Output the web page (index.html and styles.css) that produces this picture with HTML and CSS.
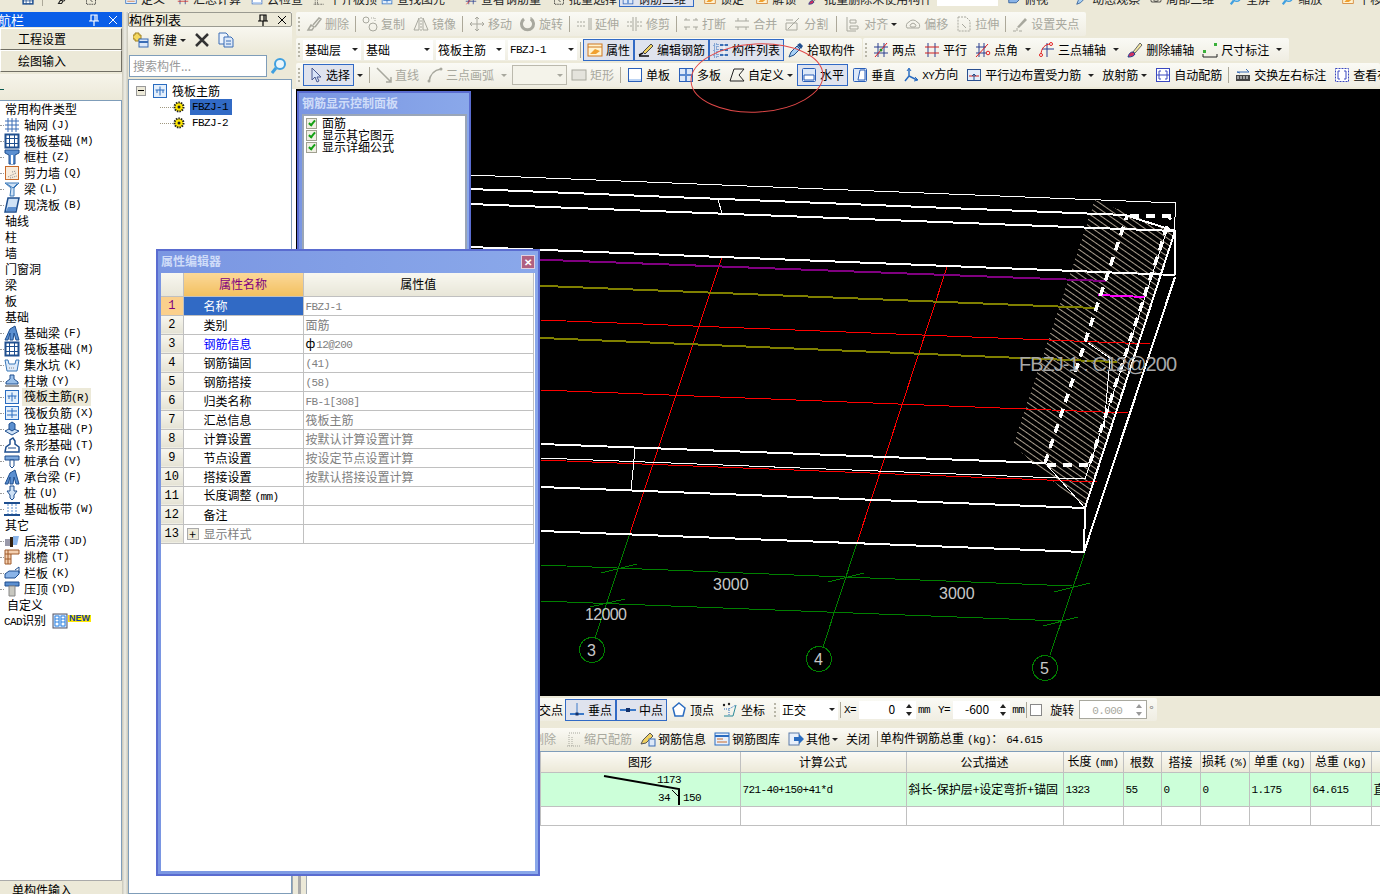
FILE: index.html
```html
<!DOCTYPE html>
<html lang="zh-CN">

<head>
    <meta charset="UTF-8">
    <title>筏板主筋 - 绘图输入</title>
    <link rel="stylesheet" href="styles.css">
</head>

<body>
    <!-- 图标 -->
    <svg class="defs" xmlns="http://www.w3.org/2000/svg">
        <symbol id="del" viewBox="0 0 16 16"><path d="M2 14l3-5 3 2-2 3zM7 9l6-7 2 1-6 8" fill="none" stroke="currentColor" stroke-width="1.5"/></symbol>
        <symbol id="copy" viewBox="0 0 16 16"><circle cx="4" cy="4" r="3" fill="none" stroke="currentColor"/><circle cx="11" cy="11" r="4" fill="none" stroke="currentColor"/><path d="M9 2h4v4" fill="none" stroke="currentColor" stroke-dasharray="1 1"/></symbol>
        <symbol id="mirror" viewBox="0 0 16 16"><path d="M6 2v12H1zM10 2v12h5z" fill="none" stroke="currentColor"/><path d="M8 1v14" stroke="currentColor" stroke-dasharray="2 1"/></symbol>
        <symbol id="move" viewBox="0 0 16 16"><path d="M8 1v14M1 8h14M6 3l2-2 2 2M6 13l2 2 2-2M3 6L1 8l2 2M13 6l2 2-2 2" fill="none" stroke="currentColor"/></symbol>
        <symbol id="rot" viewBox="0 0 16 16"><path d="M4 3a6 6 0 1 0 7 0" fill="none" stroke="currentColor" stroke-width="3"/><path d="M11 1v4h3" fill="none" stroke="currentColor"/></symbol>
        <symbol id="ext" viewBox="0 0 16 16"><path d="M1 6h9M1 10h9" stroke="currentColor" stroke-dasharray="2 1"/><path d="M13 2v12M15 2v12" stroke="currentColor"/></symbol>
        <symbol id="trim" viewBox="0 0 16 16"><path d="M6 1v14M9 1v14" stroke="currentColor"/><path d="M0 6h6M0 10h6M10 6h6M10 10h6" stroke="currentColor" stroke-dasharray="2 1"/></symbol>
        <symbol id="brk" viewBox="0 0 16 16"><path d="M1 4h6M10 4h5M1 11h6M10 11h5M3 2v2M13 2v2M3 11v3M13 11v3" stroke="currentColor"/></symbol>
        <symbol id="merge" viewBox="0 0 16 16"><path d="M1 5h14M1 11h14M4 2v3M12 2v3M4 11v3M12 11v3" stroke="currentColor"/></symbol>
        <symbol id="split" viewBox="0 0 16 16"><path d="M1 7h11v7H1zM3 13l11-11" fill="none" stroke="currentColor"/><path d="M1 4h7" stroke="currentColor"/></symbol>
        <symbol id="align" viewBox="0 0 16 16"><path d="M2 1v14h9M5 4h6v3H5zM5 10h8v3H5z" fill="none" stroke="currentColor"/></symbol>
        <symbol id="offset" viewBox="0 0 16 16"><path d="M2 12a4 4 0 0 1 2-6 5 5 0 0 1 8 0 4 4 0 0 1 2 6zM6 11a2 2 0 0 1 0-3 3 3 0 0 1 4 0 2 2 0 0 1 0 3z" fill="none" stroke="currentColor"/></symbol>
        <symbol id="stretch" viewBox="0 0 16 16"><path d="M2 1h8l4 4v10H2z" fill="none" stroke="currentColor" stroke-dasharray="2 1"/><path d="M6 8l4 4" stroke="currentColor"/></symbol>
        <symbol id="grip2" viewBox="0 0 16 16"><path d="M5 11L13 2l2 2-8 8z" fill="currentColor"/><path d="M1 15h3M7 15h3M5 12v3" stroke="currentColor"/></symbol>
        <symbol id="prop" viewBox="0 0 16 16"><rect x="1" y="2" width="14" height="12" fill="#fff3d0" stroke="#d07820"/><path d="M1 5h14" stroke="#d07820"/><path d="M3 12l5-5 5 2-4 3z" fill="#f0a030"/></symbol>
        <symbol id="edit" viewBox="0 0 16 16"><path d="M5 10l8-8 2 2-8 8z" fill="#f0d060" stroke="#444"/><path d="M1 14h10M1 13l4-2" stroke="#111" stroke-width="1.5"/></symbol>
        <symbol id="lst" viewBox="0 0 16 16"><path d="M1 2h4v3H1zM1 7h4v3H1zM1 12h4v3H1z" fill="#cfe0f4" stroke="#3a6db5" stroke-dasharray="1 1"/><path d="M7 3h8M7 8h8M7 13h8" stroke="#3a6db5" stroke-width="2"/><path d="M11 1v14" stroke="#fff"/></symbol>
        <symbol id="pick" viewBox="0 0 16 16"><path d="M1 15l2-5 6-6 3 3-6 6z" fill="#a8d0f4" stroke="#1f4f8f"/><path d="M9 3l3-2 3 3-2 3z" fill="#1f4f8f"/></symbol>
        <symbol id="twop" viewBox="0 0 16 16"><path d="M1 5h14M1 11h14M5 1v14M11 1v14" stroke="#2a3f8f"/><path d="M2 15L14 1" stroke="#e02020"/><circle cx="8" cy="8" r="1.5" fill="#2a8a2a"/></symbol>
        <symbol id="par" viewBox="0 0 16 16"><path d="M4 1v14M11 1v14" stroke="#2a3f8f"/><path d="M1 5h14M1 11h14" stroke="#d02020"/></symbol>
        <symbol id="ang" viewBox="0 0 16 16"><path d="M1 5h10M1 11h10M4 1v14M9 1v14" stroke="#2a3f8f"/><path d="M1 15L13 2" stroke="#e02020"/><circle cx="13" cy="11" r="1.8" fill="none" stroke="#e02020"/></symbol>
        <symbol id="arc3" viewBox="0 0 16 16"><path d="M8 1v14M3 7h12" stroke="#2a3f8f"/><path d="M2 13C2 6 6 2 12 2" fill="none" stroke="#e02020"/><circle cx="2" cy="13" r="1.5" fill="#fff" stroke="#e02020"/><circle cx="12" cy="2" r="1.5" fill="#fff" stroke="#e02020"/></symbol>
        <symbol id="delax" viewBox="0 0 16 16"><path d="M6 10L13 1l2 2-7 8z" fill="#f4e8a0" stroke="#666"/><path d="M1 15c1-4 3-5 5-5l2 2c-1 2-3 3-7 3z" fill="#d03060" stroke="#1f3f8f"/></symbol>
        <symbol id="dim" viewBox="0 0 16 16"><path d="M1 15h14M1 12v3M15 12v3" stroke="#222"/><rect x="1" y="8" width="3" height="3" fill="#3ab03a"/><rect x="12" y="1" width="3" height="3" fill="#3ab03a"/></symbol>
        <symbol id="arrow" viewBox="0 0 16 16"><path d="M5 1v12l3-3 2 5 2-1-2-4h4z" fill="#d8e4f8" stroke="#4a5a90"/></symbol>
        <symbol id="ln" viewBox="0 0 16 16"><path d="M1 1l14 14M10 15h5v-5" fill="none" stroke="currentColor" stroke-width="1.5"/></symbol>
        <symbol id="arc" viewBox="0 0 16 16"><path d="M2 15C3 7 7 3 14 2" fill="none" stroke="currentColor" stroke-width="1.5"/><circle cx="2" cy="14" r="1.5" fill="currentColor"/><circle cx="14" cy="2" r="1.5" fill="currentColor"/></symbol>
        <symbol id="rc" viewBox="0 0 16 16"><rect x="1" y="3" width="14" height="10" fill="#e4e3dc" stroke="currentColor"/></symbol>
        <symbol id="single" viewBox="0 0 16 16"><rect x="1.5" y="1.5" width="13" height="13" fill="#fff" stroke="#2a5fb8"/><path d="M2 12h12v2H2z" fill="#bcd4f4"/></symbol>
        <symbol id="multi" viewBox="0 0 16 16"><rect x="1.5" y="1.5" width="13" height="13" fill="#dce8f8" stroke="#2a5fb8"/><path d="M8 2v12M2 8h12" stroke="#5a8ad0" stroke-width="2"/></symbol>
        <symbol id="custom" viewBox="0 0 16 16"><path d="M5 2h10l-5 6 5 6H1z" fill="none" stroke="#222"/></symbol>
        <symbol id="hz" viewBox="0 0 16 16"><rect x="1.5" y="1.5" width="13" height="13" rx="1" fill="#dce8f8" stroke="#2a5fb8"/><path d="M3 8h10v5H3z" fill="#fff" stroke="#2a5fb8"/></symbol>
        <symbol id="vt" viewBox="0 0 16 16"><rect x="1.5" y="1.5" width="13" height="13" rx="1" fill="#dce8f8" stroke="#2a5fb8"/><path d="M8 3h5v10H6z" fill="#fff" stroke="#2a5fb8"/></symbol>
        <symbol id="xy" viewBox="0 0 16 16"><path d="M6 2v7l8 4M6 9l-4 5" fill="none" stroke="#2a6cc0" stroke-width="1.5"/><path d="M4 4l2-3 2 3M12 10l3 3-4 1" fill="none" stroke="#2a6cc0"/></symbol>
        <symbol id="pbar" viewBox="0 0 16 16"><rect x="1.5" y="2.5" width="13" height="11" fill="#e4eefa" stroke="#2a4f8f"/><path d="M3 9h10" stroke="#d02020"/><path d="M8 13V7M6 9l2-2 2 2" fill="none" stroke="#1f4f8f"/></symbol>
        <symbol id="auto" viewBox="0 0 16 16"><rect x="1.5" y="1.5" width="13" height="13" fill="#fff" stroke="#3a48c0"/><path d="M6 4H4v8h2M10 4h2v8h-2M2 8h12" fill="none" stroke="#3a48c0"/></symbol>
        <symbol id="swap" viewBox="0 0 16 16"><rect x="1" y="8" width="14" height="6" fill="#444"/><path d="M3 9v3M6 9v3M9 9v3M12 9v3" stroke="#fff"/><path d="M2 5h12M11 2l3 3M5 6l-3-1" fill="none" stroke="#3a6db5"/></symbol>
        <symbol id="look" viewBox="0 0 16 16"><rect x="1.5" y="1.5" width="13" height="13" fill="#fff" stroke="#3a48c0" stroke-dasharray="2 1"/><path d="M6 4H4v8h2M10 4h2v8h-2" fill="none" stroke="#3a48c0"/></symbol>
        <symbol id="perp" viewBox="0 0 16 16"><path d="M1 12h14" stroke="#3a78c8" stroke-width="2"/><path d="M8 1v11" stroke="#3a78c8"/><rect x="6.5" y="10.5" width="3" height="3" fill="#12306a"/></symbol>
        <symbol id="midp" viewBox="0 0 16 16"><path d="M0 8h16" stroke="#3a78c8" stroke-width="2"/><rect x="6" y="6" width="4" height="4" fill="#12306a"/></symbol>
        <symbol id="apex" viewBox="0 0 16 16"><path d="M8 1l6 5-2 8H4L2 6z" fill="#fff" stroke="#2a6cc0" stroke-width="1.5"/></symbol>
        <symbol id="coord" viewBox="0 0 16 16"><path d="M2 14h9l3-11" fill="none" stroke="#2a8a9a"/><path d="M2 7h5v7M7 7l7-4" fill="none" stroke="#2a6cc0" stroke-dasharray="1 1"/><circle cx="2" cy="3" r="1.2" fill="#222"/><circle cx="7" cy="2" r="1.2" fill="#222"/></symbol>
        <symbol id="scale" viewBox="0 0 16 16"><path d="M3 15V3M6 15V6M1 15h14M3 2h11" fill="none" stroke="currentColor" stroke-dasharray="1 1"/></symbol>
        <symbol id="info" viewBox="0 0 16 16"><path d="M1 13l2-4 7-7 3 3-7 7z" fill="#f0d060" stroke="#555"/><rect x="9" y="8" width="6" height="7" fill="#dce8f8" stroke="#3a6db5"/></symbol>
        <symbol id="lib" viewBox="0 0 16 16"><rect x="1" y="2" width="14" height="12" fill="#e8f0fb" stroke="#2a6cc0"/><path d="M1 5h14" stroke="#2a6cc0" stroke-width="2"/><path d="M3 8h6M3 11h10" stroke="#c86a2a"/></symbol>
        <symbol id="oth" viewBox="0 0 16 16"><rect x="1" y="2" width="10" height="12" fill="#e8f0fb" stroke="#5a7aa8"/><path d="M6 6h5V3l5 5-5 5v-3H6z" fill="#2a6cc0"/></symbol>
        <symbol id="grid" viewBox="0 0 16 16"><path d="M1 4h14M1 8h14M1 12h14M4 1v14M8 1v14M12 1v14" stroke="#3a6db5"/></symbol>
        <symbol id="raft" viewBox="0 0 16 16"><rect x="1.5" y="1.5" width="13" height="13" fill="#fff" stroke="#1f4f8f" stroke-width="2"/><path d="M1 5.5h14M1 10.5h14M5.5 1v14M10.5 1v14" stroke="#1f4f8f"/></symbol>
        <symbol id="col" viewBox="0 0 16 16"><path d="M1 1h14v3l-4 2v9H5V6L1 4z" fill="#5b8fd0" stroke="#1f4f8f"/><path d="M7 6h2v9H7z" fill="#fff"/></symbol>
        <symbol id="wall" viewBox="0 0 16 16"><rect x="1.5" y="1.5" width="13" height="13" fill="#f8ecdc" stroke="#c86a2a"/><path d="M4 12l8-4M6 13l7-2M8 7l4-1" stroke="#888" stroke-dasharray="1 1"/></symbol>
        <symbol id="beam" viewBox="0 0 16 16"><path d="M1 2h14l-5 5v8H6l1-8z" fill="#cfe2f6" stroke="#3a78b8"/><path d="M3 3l6 4M13 3l-4 4" stroke="#3a78b8"/></symbol>
        <symbol id="slab" viewBox="0 0 16 16"><path d="M4 1h11l-3 14H1z" fill="#cfe2f6" stroke="#1f4f8f" stroke-width="1.5"/><path d="M2 14l2-4h8v4z" fill="#5b8fd0"/></symbol>
        <symbol id="fbeam" viewBox="0 0 16 16"><path d="M1 15L6 4l5-3 4 14h-3l-2-7-1 7H6V8l-2 7z" fill="#5b8fd0" stroke="#1f4f8f"/></symbol>
        <symbol id="pit" viewBox="0 0 16 16"><path d="M1 3h3l1 4h6l1-4h3l-2 11H3z" fill="#dceafa" stroke="#3a78b8"/><path d="M5 11h6" stroke="#888" stroke-dasharray="1 1"/></symbol>
        <symbol id="pier" viewBox="0 0 16 16"><path d="M6 2h4v4l4 3v2H2V9l4-3z" fill="#9ac0ea" stroke="#1f4f8f"/><path d="M1 13h14" stroke="#999" stroke-width="2"/></symbol>
        <symbol id="tmain" viewBox="0 0 16 16"><rect x="1.5" y="1.5" width="13" height="13" fill="#e4effb" stroke="#2a6cc0"/><path d="M8 3.5v9M3.5 7h9M5 7v3M11 7v3" fill="none" stroke="#2a6cc0"/></symbol>
        <symbol id="tneg" viewBox="0 0 16 16"><rect x="1.5" y="1.5" width="13" height="13" fill="#e4effb" stroke="#2a6cc0"/><path d="M8 3v10M3 6h10M3 10h10" stroke="#2a6cc0"/></symbol>
        <symbol id="iso" viewBox="0 0 16 16"><path d="M1 10l6-3 8 3-7 4z" fill="#cfe2f6" stroke="#1f4f8f"/><path d="M5 8V3l3-2 3 2v5l-3 2z" fill="#5b8fd0" stroke="#1f4f8f"/></symbol>
        <symbol id="strip" viewBox="0 0 16 16"><path d="M1 15l1-5 4-3V3l3-2 2 3v3l4 3v5z" fill="#fff" stroke="#1f4f8f" stroke-width="1.5"/><path d="M4 11h8" stroke="#1f4f8f"/></symbol>
        <symbol id="cap" viewBox="0 0 16 16"><path d="M1 3h14v4H1z" fill="#7ca8dc" stroke="#1f4f8f"/><path d="M6 7h4v6l-2 2-2-2z" fill="#fff" stroke="#1f4f8f"/></symbol>
        <symbol id="pile" viewBox="0 0 16 16"><path d="M6 1h4v5h3l-3 4v3l-2 2-2-2v-3L3 6h3z" fill="#cfe2f6" stroke="#1f4f8f"/></symbol>
        <symbol id="band" viewBox="0 0 16 16"><path d="M0 2h16M0 14h16" stroke="#1f4f8f" stroke-width="2"/><path d="M4 3v10M8 3v10M12 3v10" stroke="#5b8fd0" stroke-dasharray="2 1"/></symbol>
        <symbol id="post" viewBox="0 0 16 16"><path d="M1 6h5v7H1z" fill="#99a"/><path d="M6 4h3v10H6z" fill="#321"/><path d="M9 3h6l-2 9H9z" fill="#8ab4e8"/></symbol>
        <symbol id="eave" viewBox="0 0 16 16"><path d="M1 1h14v4H7v10H1z" fill="#f4d0b0" stroke="#a05a2a"/><path d="M1 5h6M1 10h6M4 1v14" stroke="#a05a2a"/></symbol>
        <symbol id="rail" viewBox="0 0 16 16"><path d="M1 9l4-3h10v3l-4 4H1z" fill="#8ab4e8" stroke="#1f4f8f"/><path d="M11 5l4-3v6" fill="none" stroke="#1f4f8f"/></symbol>
        <symbol id="coping" viewBox="0 0 16 16"><path d="M1 1h14v4H1z" fill="#5b8fd0" stroke="#1f4f8f"/><path d="M5 5h6v10H5z" fill="#c8c8c0" stroke="#888"/></symbol>
        <symbol id="cad" viewBox="0 0 16 16"><rect x="1" y="1" width="14" height="14" fill="#cfe6ff" stroke="#556"/><path d="M3 3h4v10H3zM9 3h4v10H9z" fill="#fff" stroke="#2a80e0"/><path d="M3 6h4M3 9h4M9 6h4M9 9h4" stroke="#2a80e0"/></symbol>
        <symbol id="newb" viewBox="0 0 16 16"><path d="M2 1h4v2h2v4H6v2H2V7H0V3h2z" fill="#f4d860" stroke="#a08020"/><rect x="6" y="7" width="9" height="8" fill="#dce8f8" stroke="#3a6db5"/><path d="M6 10h9" stroke="#3a6db5" stroke-width="2"/></symbol>
        <symbol id="cross" viewBox="0 0 16 16"><path d="M2 2l12 12M14 2L2 14" stroke="#333" stroke-width="2.5"/></symbol>
        <symbol id="dup" viewBox="0 0 16 16"><path d="M1 1h7l2 2v9H1z" fill="#eef4fc" stroke="#3a6db5"/><path d="M6 5h7l2 2v8H6z" fill="#dce8f8" stroke="#3a6db5"/><path d="M8 9h5M8 12h5" stroke="#3a6db5"/></symbol>
        <symbol id="find" viewBox="0 0 16 16"><circle cx="9" cy="6" r="5" fill="#eaf6fc" stroke="#40a0e0" stroke-width="2"/><path d="M5 10l-4 5" stroke="#40a0e0" stroke-width="3"/></symbol>
        <symbol id="gear" viewBox="0 0 12 12"><circle cx="6" cy="6" r="4.5" fill="#ffe800" stroke="#222" stroke-width="2" stroke-dasharray="1.5 1"/><circle cx="6" cy="6" r="1.5" fill="#222"/></symbol>
        <symbol id="pin" viewBox="0 0 10 12"><path d="M2 1h6v6H2zM0 7h10M5 7v5M6 1v6" fill="none" stroke="currentColor" stroke-width="1.2"/></symbol>
        <symbol id="cls" viewBox="0 0 10 10"><path d="M1 1l8 8M9 1L1 9" stroke="currentColor"/></symbol>
    </svg>

    <div class="app">
        <!-- 顶部工具条, 只露出下半截 -->
        <div class="topbar">
            <span class="t"><svg class="ic"><use href="#raft"/></svg></span>
            <span class="top-sep"></span>
            <span class="t g12"><svg class="ic"><use href="#del"/></svg></span>
            <span class="t g12"><svg class="ic"><use href="#stretch"/></svg></span>
            <span class="t g24"><svg class="ic"><use href="#lib"/></svg>定义</span>
            <span class="t g8"><svg class="ic"><use href="#par"/></svg>汇总计算</span>
            <span class="t"><svg class="ic"><use href="#single"/></svg>云检查</span>
            <span class="t"><svg class="ic"><use href="#scale"/></svg>平齐板顶</span>
            <span class="t g0"><svg class="ic"><use href="#tneg"/></svg>查找图元</span>
            <span class="t g16"><svg class="ic"><use href="#twop"/></svg>查看钢筋量</span>
            <span class="t g8"><svg class="ic"><use href="#stretch"/></svg>批量选择</span>
            <span class="t g0 t-on"><svg class="ic"><use href="#multi"/></svg>钢筋三维</span>
            <span class="t g8"><svg class="ic"><use href="#prop"/></svg>锁定</span>
            <span class="t g8"><svg class="ic"><use href="#prop"/></svg>解锁</span>
            <span class="t g8"><svg class="ic"><use href="#delax"/></svg>批量删除未使用构件</span>
            <span class="t-combo"></span>
            <span class="t g8"><svg class="ic"><use href="#rail"/></svg>俯视</span>
            <span class="t g24"><svg class="ic"><use href="#pick"/></svg>动态观察</span>
            <span class="t"><svg class="ic"><use href="#offset"/></svg>局部三维</span>
            <span class="t g12"><svg class="ic"><use href="#find"/></svg>全屏</span>
            <span class="t g8"><svg class="ic"><use href="#find"/></svg>缩放</span>
            <span class="t g16"><svg class="ic"><use href="#prop"/></svg>平移</span>
        </div>

        <!-- 导航栏 -->
        <aside class="nav">
            <div class="pane-title active">
                <span class="clip">模块导航栏</span>
                <svg class="pin"><use href="#pin"/></svg>
                <svg class="cls"><use href="#cls"/></svg>
            </div>
            <div class="nav-btn">工程设置</div>
            <div class="nav-btn">绘图输入</div>
            <div class="nav-band"><i class="mark"></i></div>
            <div class="nav-list">
                <div class="hd">常用构件类型</div>
                <div class="it"><svg class="ic"><use href="#grid"/></svg>轴网<b class="m">(J)</b></div>
                <div class="it"><svg class="ic"><use href="#raft"/></svg>筏板基础<b class="m">(M)</b></div>
                <div class="it"><svg class="ic"><use href="#col"/></svg>框柱<b class="m">(Z)</b></div>
                <div class="it"><svg class="ic"><use href="#wall"/></svg>剪力墙<b class="m">(Q)</b></div>
                <div class="it"><svg class="ic"><use href="#beam"/></svg>梁<b class="m">(L)</b></div>
                <div class="it"><svg class="ic"><use href="#slab"/></svg>现浇板<b class="m">(B)</b></div>
                <div class="hd">轴线</div>
                <div class="hd">柱</div>
                <div class="hd">墙</div>
                <div class="hd">门窗洞</div>
                <div class="hd">梁</div>
                <div class="hd">板</div>
                <div class="hd">基础</div>
                <div class="it"><svg class="ic"><use href="#fbeam"/></svg>基础梁<b class="m">(F)</b></div>
                <div class="it"><svg class="ic"><use href="#raft"/></svg>筏板基础<b class="m">(M)</b></div>
                <div class="it"><svg class="ic"><use href="#pit"/></svg>集水坑<b class="m">(K)</b></div>
                <div class="it"><svg class="ic"><use href="#pier"/></svg>柱墩<b class="m">(Y)</b></div>
                <div class="it sel"><svg class="ic"><use href="#tmain"/></svg><span>筏板主筋<b class="m">(R)</b></span></div>
                <div class="it"><svg class="ic"><use href="#tneg"/></svg>筏板负筋<b class="m">(X)</b></div>
                <div class="it"><svg class="ic"><use href="#iso"/></svg>独立基础<b class="m">(P)</b></div>
                <div class="it"><svg class="ic"><use href="#strip"/></svg>条形基础<b class="m">(T)</b></div>
                <div class="it"><svg class="ic"><use href="#cap"/></svg>桩承台<b class="m">(V)</b></div>
                <div class="it"><svg class="ic"><use href="#fbeam"/></svg>承台梁<b class="m">(F)</b></div>
                <div class="it"><svg class="ic"><use href="#pile"/></svg>桩<b class="m">(U)</b></div>
                <div class="it"><svg class="ic"><use href="#band"/></svg>基础板带<b class="m">(W)</b></div>
                <div class="hd">其它</div>
                <div class="it"><svg class="ic"><use href="#post"/></svg>后浇带<b class="m">(JD)</b></div>
                <div class="it"><svg class="ic"><use href="#eave"/></svg>挑檐<b class="m">(T)</b></div>
                <div class="it"><svg class="ic"><use href="#rail"/></svg>栏板<b class="m">(K)</b></div>
                <div class="it"><svg class="ic"><use href="#coping"/></svg>压顶<b class="m">(YD)</b></div>
                <div class="hd custom">自定义</div>
                <div class="cad-row"><span><span class="m">CAD</span>识别</span><svg class="ic"><use href="#cad"/></svg><em class="new">NEW</em></div>
            </div>
            <div class="nav-foot">单构件输入</div>
        </aside>

        <div class="split"></div>

        <!-- 构件列表 -->
        <section class="list">
            <div class="pane-title plain">
                <span>构件列表</span>
                <svg class="pin"><use href="#pin"/></svg>
                <svg class="cls"><use href="#cls"/></svg>
            </div>
            <div class="list-tools">
                <svg class="ic"><use href="#newb"/></svg>
                <span class="new-label">新建</span><i class="caret"></i>
                <svg class="ic big-x"><use href="#cross"/></svg>
                <svg class="ic"><use href="#dup"/></svg>
            </div>
            <div class="search">
                <div class="search-box">搜索构件...</div>
                <svg class="ic"><use href="#find"/></svg>
            </div>
            <div class="tree">
                <div class="tree-root">
                    <i class="minus"></i>
                    <svg class="ic"><use href="#tmain"/></svg>
                    <span>筏板主筋</span>
                </div>
                <div class="tree-node">
                    <i class="dots"></i>
                    <svg class="gear"><use href="#gear"/></svg>
                    <span class="m node-sel">FBZJ-1</span>
                </div>
                <div class="tree-node">
                    <i class="dots"></i>
                    <svg class="gear"><use href="#gear"/></svg>
                    <span class="m node-txt">FBZJ-2</span>
                </div>
            </div>
        </section>

        <!-- 工作区 -->
        <main class="work">
            <div class="row r1">
                <div class="tb dim">
                    <i class="grip"></i>
                    <span class="tool"><svg class="ic"><use href="#del"/></svg>删除</span>
                    <i class="sep"></i>
                    <span class="tool"><svg class="ic"><use href="#copy"/></svg>复制</span>
                    <span class="tool"><svg class="ic"><use href="#mirror"/></svg>镜像</span>
                    <i class="sep"></i>
                    <span class="tool"><svg class="ic"><use href="#move"/></svg>移动</span>
                    <span class="tool"><svg class="ic"><use href="#rot"/></svg>旋转</span>
                    <i class="sep"></i>
                    <span class="tool"><svg class="ic"><use href="#ext"/></svg>延伸</span>
                    <span class="tool"><svg class="ic"><use href="#trim"/></svg>修剪</span>
                    <i class="sep"></i>
                    <span class="tool"><svg class="ic"><use href="#brk"/></svg>打断</span>
                    <span class="tool"><svg class="ic"><use href="#merge"/></svg>合并</span>
                    <span class="tool"><svg class="ic"><use href="#split"/></svg>分割</span>
                    <i class="sep gap"></i>
                    <span class="tool"><svg class="ic"><use href="#align"/></svg>对齐<i class="caret near"></i></span>
                    <span class="tool"><svg class="ic"><use href="#offset"/></svg>偏移</span>
                    <span class="tool"><svg class="ic"><use href="#stretch"/></svg>拉伸</span>
                    <i class="sep"></i>
                    <span class="tool"><svg class="ic"><use href="#grip2"/></svg>设置夹点</span>
                </div>
            </div>

            <div class="row r2">
                <div class="tb">
                    <i class="grip"></i>
                    <div class="combo w58">基础层<i class="caret"></i></div>
                    <div class="combo w69">基础<i class="caret"></i></div>
                    <div class="combo w69">筏板主筋<i class="caret"></i></div>
                    <div class="combo w69"><span class="m">FBZJ-1</span><i class="caret"></i></div>
                    <i class="sep wide"></i>
                    <span class="tool on"><svg class="ic"><use href="#prop"/></svg>属性</span>
                    <span class="tool on"><svg class="ic"><use href="#edit"/></svg>编辑钢筋</span>
                    <span class="tool on"><svg class="ic"><use href="#lst"/></svg>构件列表</span>
                    <span class="tool"><svg class="ic"><use href="#pick"/></svg>拾取构件</span>
                </div>
                <div class="tb">
                    <i class="grip"></i>
                    <span class="tool"><svg class="ic"><use href="#twop"/></svg>两点</span>
                    <span class="tool"><svg class="ic"><use href="#par"/></svg>平行</span>
                    <span class="tool"><svg class="ic"><use href="#ang"/></svg>点角<i class="caret"></i></span>
                    <span class="tool"><svg class="ic"><use href="#arc3"/></svg>三点辅轴<i class="caret"></i></span>
                    <span class="tool"><svg class="ic"><use href="#delax"/></svg>删除辅轴</span>
                    <span class="tool"><svg class="ic"><use href="#dim"/></svg>尺寸标注<i class="caret"></i></span>
                </div>
            </div>

            <div class="row r3">
                <div class="tb full">
                    <i class="grip"></i>
                    <span class="tool on sel-btn"><svg class="ic"><use href="#arrow"/></svg>选择</span>
                    <i class="caret lone"></i>
                    <i class="sep"></i>
                    <span class="tool gray"><svg class="ic"><use href="#ln"/></svg>直线</span>
                    <span class="tool gray"><svg class="ic"><use href="#arc"/></svg>三点画弧<i class="caret"></i></span>
                    <div class="combo blank"><i class="caret"></i></div>
                    <span class="tool gray"><svg class="ic"><use href="#rc"/></svg>矩形</span>
                    <i class="sep"></i>
                    <span class="tool"><svg class="ic"><use href="#single"/></svg>单板</span>
                    <span class="tool"><svg class="ic"><use href="#multi"/></svg>多板</span>
                    <span class="tool"><svg class="ic"><use href="#custom"/></svg>自定义<i class="caret near"></i></span>
                    <span class="tool on"><svg class="ic"><use href="#hz"/></svg>水平</span>
                    <span class="tool"><svg class="ic"><use href="#vt"/></svg>垂直</span>
                    <span class="tool"><svg class="ic"><use href="#xy"/></svg><span><span class="m">XY</span>方向</span></span>
                    <span class="tool"><svg class="ic"><use href="#pbar"/></svg>平行边布置受力筋<i class="caret"></i></span>
                    <span class="tool">放射筋<i class="caret near"></i></span>
                    <span class="tool"><svg class="ic"><use href="#auto"/></svg>自动配筋</span>
                    <i class="sep"></i>
                    <span class="tool"><svg class="ic"><use href="#swap"/></svg>交换左右标注</span>
                    <span class="tool"><svg class="ic"><use href="#look"/></svg>查看布筋</span>
                </div>
            </div>

            <!-- 绘图区 -->
            <svg class="cad" viewBox="296 89 1084 607" xmlns="http://www.w3.org/2000/svg">
                <defs>
                    <pattern id="hatch" width="8" height="5" patternUnits="userSpaceOnUse" patternTransform="rotate(35)">
                        <line x1="0" y1="0" x2="8" y2="0" stroke="#a89c8c"/>
                    </pattern>
                </defs>
                <polygon points="1095,200 1175,232 1085,510 1013,445" fill="url(#hatch)"/>

                <g class="c-green">
                    <path d="M541 565L1072 586M541 601L1061 621"/>
                    <path d="M630 533L595 638M857 543L823 647M1085 552L1050 655"/>
                    <path d="M601 573L637 564M590 607L625 599M828 582L864 573M1054 592L1090 583M1043 626L1078 617"/>
                    <circle cx="592" cy="650" r="12.5"/>
                    <circle cx="819" cy="659" r="12.5"/>
                    <circle cx="1045" cy="668" r="12.5"/>
                </g>
                <g class="c-red">
                    <path d="M722 257L630 533M947 267L857 543"/>
                    <path d="M541 320L1150 344M541 390L1128 413M541 460L1097 482"/>
                </g>
                <path class="c-purple" d="M470 257L1106 281"/>
                <path class="c-olive" d="M470 283L1095 308M470 335L1117 362"/>
                <path class="c-magenta" d="M1098 295L1145 297"/>

                <g class="c-thin">
                    <path d="M470 175L1176 203L1174 231M718 200L722 213"/>
                    <path d="M541 458L1085 479L1167 230M1045 463L1085 508"/>
                    <path d="M635 449L631 491M1088 343L1110 358L1104 428"/>
                </g>
                <g class="c-white">
                    <path d="M470 189L1125 215L1175 231M470 204L1175 231V275M470 247L1175 275"/>
                    <path d="M541 444L1045 463M541 487L1085 508M541 531L1084 552L1085 508L1175 231M1084 552L1175 277"/>
                </g>
                <g class="c-dash">
                    <path d="M1045 463L1127 216M1090 463L1170 218"/>
                    <path d="M1047 465H1090M1130 216H1172"/>
                </g>

                <g class="c-text">
                    <text x="713" y="590">3000</text>
                    <text x="939" y="599">3000</text>
                    <text x="585" y="620" textLength="42">12000</text>
                    <text x="587" y="656">3</text>
                    <text x="814" y="665">4</text>
                    <text x="1040" y="674">5</text>
                    <text class="c-label" x="1019" y="371" textLength="158">FBZJ-1 : C12@200</text>
                </g>
            </svg>

            <div class="snap">
                <div class="tb snap-tb">
                    <span class="lab">交点</span>
                    <span class="tool on"><svg class="ic"><use href="#perp"/></svg>垂点</span>
                    <span class="tool on"><svg class="ic"><use href="#midp"/></svg>中点</span>
                    <span class="tool"><svg class="ic"><use href="#apex"/></svg>顶点</span>
                    <span class="tool"><svg class="ic"><use href="#coord"/></svg>坐标</span>
                    <i class="grip snap-grip"></i>
                    <div class="combo w58">正交<i class="caret"></i></div>
                    <i class="sep"></i>
                    <span class="m lbl-x">X=</span>
                    <div class="num">0</div><i class="spin"></i>
                    <span class="m lbl-mm">mm</span>
                    <span class="m lbl-y">Y=</span>
                    <div class="num">-600</div><i class="spin"></i>
                    <span class="m lbl-mm">mm</span>
                    <i class="sep"></i>
                    <i class="chk-off"></i>
                    <span class="lab rot">旋转</span>
                    <div class="num off"><span class="m">0.000</span><i class="spin in"></i></div>
                    <span class="deg">°</span>
                </div>
            </div>

            <div class="rebar-tb">
                <span class="lab gray del-lab">删除</span>
                <span class="tool gray"><svg class="ic"><use href="#scale"/></svg>缩尺配筋</span>
                <span class="tool"><svg class="ic"><use href="#info"/></svg>钢筋信息</span>
                <span class="tool"><svg class="ic"><use href="#lib"/></svg>钢筋图库</span>
                <span class="tool"><svg class="ic"><use href="#oth"/></svg>其他<i class="caret near"></i></span>
                <span class="tool">关闭</span>
                <i class="sep wide"></i>
                <span class="weight">单构件钢筋总重<b class="m">(kg)</b>：<span class="m">64.615</span></span>
            </div>

            <div class="bottom">
                <div class="handle"></div>
                <table class="rebar">
                    <thead>
                        <tr>
                            <th></th>
                            <th>图形</th>
                            <th>计算公式</th>
                            <th>公式描述</th>
                            <th>长度<b class="m">(mm)</b></th>
                            <th>根数</th>
                            <th>搭接</th>
                            <th>损耗<b class="m">(%)</b></th>
                            <th>单重<b class="m">(kg)</b></th>
                            <th>总重<b class="m">(kg)</b></th>
                            <th></th>
                        </tr>
                    </thead>
                    <tbody>
                        <tr class="hit">
                            <td></td>
                            <td class="shape">
                                <svg class="bar-fig" viewBox="0 0 200 33" xmlns="http://www.w3.org/2000/svg">
                                    <path d="M63 3L138 16V32" fill="none" stroke="#000" stroke-width="2"/>
                                    <path d="M131 17L138 24" stroke="#000"/>
                                    <text x="116" y="10">1173</text>
                                    <text x="117" y="28">34</text>
                                    <text x="142" y="28">150</text>
                                </svg>
                            </td>
                            <td><span class="m">721-40+150+41*d</span></td>
                            <td>斜长-保护层+设定弯折+锚固</td>
                            <td><span class="m">1323</span></td>
                            <td><span class="m">55</span></td>
                            <td><span class="m">0</span></td>
                            <td><span class="m">0</span></td>
                            <td><span class="m">1.175</span></td>
                            <td><span class="m">64.615</span></td>
                            <td>直</td>
                        </tr>
                        <tr class="empty">
                            <td></td><td></td><td></td><td></td><td></td><td></td><td></td><td></td><td></td><td></td><td></td>
                        </tr>
                    </tbody>
                </table>
            </div>
        </main>

        <!-- 批注圈 -->
        <svg class="note" viewBox="0 0 140 76" xmlns="http://www.w3.org/2000/svg">
            <ellipse cx="70" cy="38" rx="66" ry="34" transform="rotate(-3 70 38)"/>
        </svg>

        <!-- 钢筋显示控制面板 -->
        <div class="dlg dlg-ctl">
            <div class="dlg-title">钢筋显示控制面板</div>
            <div class="dlg-body checks">
                <label><i class="chk"></i>面筋</label>
                <label><i class="chk"></i>显示其它图元</label>
                <label><i class="chk"></i>显示详细公式</label>
            </div>
        </div>

        <!-- 属性编辑器 -->
        <div class="dlg dlg-prop">
            <div class="dlg-title">属性编辑器<span class="dlg-close">✕</span></div>
            <div class="dlg-body">
                <table class="props">
                    <thead>
                        <tr><th class="no"></th><th class="hot">属性名称</th><th>属性值</th></tr>
                    </thead>
                    <tbody>
                        <tr class="cur"><td class="no">1</td><td class="nm">名称</td><td class="vl"><span class="m">FBZJ-1</span></td></tr>
                        <tr><td class="no">2</td><td class="nm">类别</td><td class="vl">面筋</td></tr>
                        <tr><td class="no">3</td><td class="nm link">钢筋信息</td><td class="vl"><span class="rebar-sym">ф</span><span class="m">12@200</span></td></tr>
                        <tr><td class="no">4</td><td class="nm">钢筋锚固</td><td class="vl"><span class="m">(41)</span></td></tr>
                        <tr><td class="no">5</td><td class="nm">钢筋搭接</td><td class="vl"><span class="m">(58)</span></td></tr>
                        <tr><td class="no">6</td><td class="nm">归类名称</td><td class="vl"><span class="m">FB-1[308]</span></td></tr>
                        <tr><td class="no">7</td><td class="nm">汇总信息</td><td class="vl">筏板主筋</td></tr>
                        <tr><td class="no">8</td><td class="nm">计算设置</td><td class="vl">按默认计算设置计算</td></tr>
                        <tr><td class="no">9</td><td class="nm">节点设置</td><td class="vl">按设定节点设置计算</td></tr>
                        <tr><td class="no">10</td><td class="nm">搭接设置</td><td class="vl">按默认搭接设置计算</td></tr>
                        <tr><td class="no">11</td><td class="nm">长度调整<b class="m">(mm)</b></td><td class="vl"></td></tr>
                        <tr><td class="no">12</td><td class="nm">备注</td><td class="vl"></td></tr>
                        <tr><td class="no">13</td><td class="nm muted"><i class="plus">+</i>显示样式</td><td class="vl"></td></tr>
                    </tbody>
                </table>
            </div>
        </div>
    </div>
</body>

</html>
```

FILE: styles.css
```css
/* 整体 */
html, body {
    margin: 0;
    padding: 0;
}

body {
    width: 1380px;
    height: 894px;
    overflow: hidden;
    background-color: #ece9d8;
    color: #000;
    font-family: "Noto Sans CJK SC", sans-serif;
    font-size: 12px;
    line-height: 14px;
}

.defs {
    position: absolute;
    width: 0;
    height: 0;
}

.app {
    position: relative;
    display: grid;
    grid-template-columns: 122px 6px 164px 1fr;
    grid-template-rows: 12px 882px;
    width: 1380px;
    height: 894px;
}

.ic {
    flex: none;
    width: 16px;
    height: 16px;
}

/* 西文小字: 11px 收窄到每字 6px */
.m {
    font-family: "Liberation Mono", monospace;
    font-size: 11px;
    font-weight: normal;
    letter-spacing: -0.6px;
}

th .m, .nm .m, .weight .m {
    margin-left: 3px;
}

.it .m {
    margin-left: -1px;
}

/* 顶部条 */
.topbar {
    grid-column: 1 / -1;
    display: flex;
    align-items: flex-start;
    overflow: hidden;
    padding-left: 20px;
    color: #222;
}

.t {
    flex: none;
    display: flex;
    align-items: center;
    gap: 4px;
    height: 16px;
    margin-top: -9px;
    margin-left: 6px;
    padding: 0 2px;
    white-space: nowrap;
}

.t .ic {
    width: 12px;
    height: 12px;
}

.t:first-child {
    margin-left: 0;
}

.g0 { margin-left: 0; }
.g8 { margin-left: 8px; }
.g12 { margin-left: 12px; }
.g16 { margin-left: 16px; }
.g24 { margin-left: 24px; }

.t-on {
    width: 75px;
    box-sizing: border-box;
    border: 1px solid #316ac5;
    background-color: #dfe3ee;
}

.t-combo {
    flex: none;
    width: 61px;
    height: 6px;
    margin-left: 3px;
    background-color: #fff;
}

.top-sep {
    flex: none;
    width: 1px;
    height: 6px;
    margin-left: 6px;
    background-color: #aca899;
}

/* 面板标题 */
.pane-title {
    display: flex;
    align-items: center;
    height: 15px;
    box-sizing: border-box;
    font-size: 13px;
    overflow: hidden;
}

.pane-title .pin {
    width: 10px;
    height: 12px;
    margin-left: auto;
    margin-right: 9px;
}

.pane-title .cls {
    width: 10px;
    height: 10px;
    margin-right: 4px;
}

.pane-title.active {
    background-color: #0a5ee8;
    color: #fff;
}

.pane-title.active .clip {
    width: 24px;
    direction: rtl;
    overflow: hidden;
    white-space: nowrap;
}

.pane-title.plain {
    background-color: #ece9d8;
    border: 1px solid #9a9a90;
    border-radius: 2px;
}

/* 导航栏 */
.nav {
    display: flex;
    flex-direction: column;
    overflow: hidden;
}

.nav-btn {
    height: 20px;
    margin-top: 1px;
    padding-left: 17px;
    border: 1px solid;
    border-color: #fff #716f64 #716f64 #fff;
    background-color: #ece9d8;
    line-height: 20px;
}

.nav-btn + .nav-btn {
    margin-top: 0;
}

.nav-band {
    position: relative;
    height: 26px;
    margin-top: 2px;
    background: linear-gradient(#f6f4ea, #ece9d8);
}

.mark {
    position: absolute;
    left: 0;
    top: 15px;
    width: 4px;
    height: 1px;
    background-color: #0a5a50;
}

.nav-list {
    flex: 1;
    border-top: 1px solid #7f9db9;
    border-right: 1px solid #7f9db9;
    background-color: #fff;
}

.hd, .it, .cad-row {
    display: flex;
    align-items: center;
    height: 16px;
    line-height: 16px;
    white-space: nowrap;
}

.hd {
    padding-left: 5px;
}

.hd.custom {
    padding-left: 7px;
}

.it {
    gap: 4px;
    padding-left: 4px;
}

.it::before {
    content: "";
    position: absolute;
    left: 0;
    width: 4px;
    border-top: 1px dotted #999;
}

.it.sel span {
    margin-left: -2px;
    padding: 0 2px;
    background-color: #ece9d8;
}

.cad-row {
    padding-left: 4px;
}

.cad-row .ic {
    margin-left: 6px;
}

.new {
    height: 7px;
    margin-top: -6px;
    padding: 0 1px;
    background-color: #ffe800;
    color: #1a3fa0;
    font-family: "Liberation Sans", sans-serif;
    font-size: 9px;
    font-style: normal;
    font-weight: bold;
    line-height: 7px;
}

.nav-foot {
    height: 13px;
    padding-left: 12px;
    border-top: 1px solid #aaa;
    background-color: #ece9d8;
    line-height: 18px;
    overflow: hidden;
}

.split {
    background: linear-gradient(90deg, #c8c6b8, #eeeee6 50%, #c8c6b8);
}

/* 构件列表 */
.list {
    display: flex;
    flex-direction: column;
    background-color: #fff;
    overflow: hidden;
}

.list-tools {
    display: flex;
    align-items: center;
    height: 26px;
    padding-left: 5px;
    background: linear-gradient(#f8f7f0, #ece9d8);
}

.new-label {
    margin-left: 4px;
}

.list-tools .caret {
    margin-left: 3px;
}

.big-x {
    margin: 0 8px 0 8px;
}

.search {
    display: flex;
    align-items: center;
    gap: 4px;
    height: 26px;
    padding-left: 1px;
    background-color: #ece9d8;
}

.search-box {
    width: 138px;
    height: 22px;
    padding-left: 3px;
    box-sizing: border-box;
    border: 1px solid #7f9db9;
    background-color: #fff;
    color: #999;
    line-height: 20px;
}

.tree {
    flex: 1;
    border: 1px solid #7f9db9;
    padding-top: 2px;
}

.tree-root {
    display: flex;
    align-items: center;
    height: 17px;
    padding-left: 7px;
}

.minus {
    position: relative;
    width: 8px;
    height: 8px;
    margin-right: 6px;
    border: 1px solid #999;
    background-color: #ece9d8;
}

.minus::after {
    content: "";
    position: absolute;
    left: 1px;
    top: 3px;
    width: 6px;
    height: 1px;
    background-color: #000;
}

.tree-root span {
    margin-left: 4px;
}

.tree-node {
    display: flex;
    align-items: center;
    height: 16px;
    padding-left: 31px;
}

.dots {
    width: 13px;
    border-top: 1px dotted #a09880;
}

.gear {
    width: 12px;
    height: 12px;
}

.node-sel, .node-txt {
    margin-left: 5px;
    padding: 1px 4px 1px 2px;
    line-height: 14px;
}

.node-sel {
    background-color: #316ac5;
}

/* 工作区 */
.work {
    display: flex;
    flex-direction: column;
    overflow: hidden;
    min-width: 0;
    background-color: #fff;
}

.row {
    flex: none;
    display: flex;
    padding-left: 4px;
    background-color: #ece9d8;
}

.r1 {
    height: 26px;
    align-items: flex-start;
}

.r1 .tb {
    height: 24px;
}

.r2 {
    height: 25px;
    gap: 1px;
    align-items: flex-start;
}

.r2 .tb {
    height: 23px;
}

.r3 {
    height: 26px;
    align-items: flex-start;
}

.tb {
    flex: none;
    display: flex;
    align-items: center;
    padding-right: 3px;
    background: linear-gradient(#fafaf5, #efede2);
    border-radius: 2px;
    white-space: nowrap;
}

.tb.full {
    flex: 1;
    height: 24px;
    overflow: hidden;
}

.grip {
    flex: none;
    width: 1px;
    height: 14px;
    margin: 0 1px 0 2px;
    border-left: 2px dotted #b8b6a8;
}

.tool {
    flex: none;
    display: flex;
    align-items: center;
    gap: 3px;
    height: 22px;
    padding: 0 4px;
    box-sizing: border-box;
}

.tool.on {
    padding: 0 3px;
    border: 1px solid #316ac5;
    background-color: #dfe3ee;
}

.sel-btn {
    margin-left: 1px;
}

.dim, .gray {
    color: #a8a89e;
}

.sep {
    flex: none;
    width: 1px;
    height: 16px;
    margin: 0 2px;
    background-color: #aca899;
}

.sep.gap {
    margin: 0 4px;
}

.sep.wide {
    margin: 0 2px 0 3px;
}

.caret {
    flex: none;
    width: 0;
    height: 0;
    margin-left: 4px;
    border-left: 3px solid transparent;
    border-right: 3px solid transparent;
    border-top: 3px solid #222;
}

.caret.near {
    margin-left: 0;
}

.caret.lone {
    margin: 0 4px 0 3px;
}

.gray .caret {
    border-top-color: #a8a89e;
}

.combo {
    flex: none;
    display: flex;
    align-items: center;
    justify-content: space-between;
    height: 20px;
    padding: 0 3px 0 2px;
    box-sizing: border-box;
    background-color: #fff;
}

.w58 {
    width: 58px;
    margin-left: 1px;
}

.w69 {
    width: 69px;
    margin-left: 3px;
}

.combo.blank {
    justify-content: flex-end;
    width: 55px;
    margin-left: 1px;
    border: 1px solid #bbb9ad;
    background-color: #f4f3ea;
}

.combo.blank .caret {
    border-top-color: #a8a89e;
}

/* 绘图区 */
.cad {
    flex: none;
    display: block;
    width: 1084px;
    height: 607px;
    margin-left: 4px;
    background-color: #000;
    shape-rendering: crispEdges;
}

.cad path, .cad circle {
    fill: none;
}

.c-green {
    stroke: #008000;
}

.c-red {
    stroke: #ff0000;
}

.c-purple {
    stroke: #800080;
    stroke-width: 2;
}

.c-olive {
    stroke: #808000;
    stroke-width: 2;
}

.c-magenta {
    stroke: #ff00ff;
    stroke-width: 2;
}

.c-thin {
    stroke: #fff;
}

.c-white {
    stroke: #fff;
    stroke-width: 2;
}

.c-dash {
    stroke: #fff;
    stroke-width: 3.5;
    stroke-dasharray: 9 7;
}

.c-text {
    fill: #c8c8c8;
    font-family: "Liberation Sans", sans-serif;
    font-size: 16px;
}

.c-label {
    fill: #a8a8a8;
    font-size: 20px;
}

/* 捕捉条 */
.snap {
    flex: none;
    height: 32px;
    padding-top: 2px;
    box-sizing: border-box;
    background-color: #ece9d8;
}

.snap-tb {
    display: inline-flex;
    height: 23px;
    padding-left: 247px;
}

.lab {
    flex: none;
    margin-right: 2px;
}

.snap-grip {
    margin: 0 2px 0 5px;
}

.lbl-x {
    margin-left: 1px;
}

.num {
    flex: none;
    width: 44px;
    height: 18px;
    margin-left: 3px;
    padding-right: 8px;
    box-sizing: border-box;
    background-color: #fff;
    text-align: right;
    line-height: 16px;
}

.spin {
    position: relative;
    flex: none;
    width: 13px;
    height: 18px;
    background-color: #fff;
}

.spin::before, .spin::after {
    content: "";
    position: absolute;
    left: 3px;
    border-left: 3px solid transparent;
    border-right: 3px solid transparent;
}

.spin::before {
    top: 3px;
    border-bottom: 4px solid #222;
}

.spin::after {
    bottom: 3px;
    border-top: 4px solid #222;
}

.lbl-mm {
    margin-left: 2px;
}

.lbl-y {
    margin-left: 8px;
}

.chk-off {
    flex: none;
    width: 10px;
    height: 10px;
    margin-left: 1px;
    border: 1px solid #888;
    background-color: #fff;
}

.rot {
    margin: 0 4px 0 8px;
}

.num.off {
    position: relative;
    width: 68px;
    height: 19px;
    margin-left: 1px;
    padding-right: 24px;
    border: 1px solid #a8a89e;
    color: #a8a89e;
}

.spin.in {
    position: absolute;
    right: 0;
    top: 0;
    background: none;
}

.spin.in::before {
    border-bottom-color: #999;
}

.spin.in::after {
    border-top-color: #999;
}

.deg {
    margin-left: 2px;
    color: #777;
}

/* 钢筋工具条 */
.rebar-tb {
    flex: none;
    display: flex;
    align-items: center;
    height: 24px;
    padding-left: 240px;
    padding-bottom: 1px;
    border-bottom: 1px solid #7f9db9;
    box-sizing: border-box;
    background: linear-gradient(#fbfaf5, #e9e7d8);
    white-space: nowrap;
}

.rebar-tb .tool {
    gap: 2px;
}

.del-lab {
    margin-right: 6px;
}

.bottom {
    flex: 1;
    display: flex;
    min-height: 0;
    overflow: hidden;
}

.handle {
    flex: none;
    width: 15px;
    border-left: 1px solid #a0a8b0;
    border-right: 1px solid #a0a8b0;
    background: linear-gradient(90deg, #ece9d8 42%, #aaa 42%, #aaa 58%, #ece9d8 58%);
    box-sizing: border-box;
}

.rebar {
    flex: none;
    width: 1124px;
    height: 74px;
    table-layout: fixed;
    border-collapse: collapse;
}

.rebar th, .rebar td {
    padding: 0 2px;
    border-right: 1px solid #c0c0c0;
    border-bottom: 1px solid #c0c0c0;
    overflow: hidden;
    white-space: nowrap;
}

.rebar th {
    box-sizing: border-box;
    height: 20px;
    padding: 1px 0 0;
    background: linear-gradient(#fbfaf5, #ece9d8);
    font-weight: normal;
}

.rebar th:nth-child(1) { width: 233px; }
.rebar th:nth-child(2) { width: 200px; }
.rebar th:nth-child(3) { width: 166px; }
.rebar th:nth-child(4) { width: 157px; }
.rebar th:nth-child(5) { width: 60px; }
.rebar th:nth-child(6) { width: 38px; }
.rebar th:nth-child(7) { width: 39px; }
.rebar th:nth-child(8) { width: 49px; }
.rebar th:nth-child(9) { width: 61px; }
.rebar th:nth-child(10) { width: 61px; }

.hit td {
    height: 33px;
    background-color: #ccffd9;
}

.empty td {
    height: 18px;
}

.rebar .shape {
    padding: 0;
}

.bar-fig {
    display: block;
    width: 200px;
    height: 33px;
    font-family: "Liberation Mono", monospace;
    font-size: 11px;
    letter-spacing: -0.6px;
}

/* 批注圈 */
.note {
    position: absolute;
    left: 687px;
    top: 40px;
    width: 140px;
    height: 76px;
    fill: none;
    stroke: #e04848;
    stroke-width: 1;
    pointer-events: none;
}

/* 浮动窗口 */
.dlg {
    position: absolute;
    display: flex;
    flex-direction: column;
    box-sizing: border-box;
    padding: 0 3px 3px;
    border: 2px solid #5a6cd0;
    background: linear-gradient(90deg, #7a96e2, #8aa8ea);
}

.dlg-ctl {
    left: 297px;
    top: 91px;
    width: 174px;
    height: 172px;
    padding: 0 2px 2px 3px;
}

.dlg-prop {
    left: 156px;
    top: 249px;
    width: 384px;
    height: 627px;
}

.dlg-title {
    position: relative;
    flex: none;
    height: 21px;
    color: #cfdcf8;
    font-weight: bold;
    line-height: 20px;
}

.dlg-prop .dlg-title {
    height: 22px;
}

.dlg-close {
    position: absolute;
    right: 0;
    top: 4px;
    width: 14px;
    height: 14px;
    border: 1px solid #e0d0e0;
    box-sizing: border-box;
    background-color: #b06080;
    color: #fff;
    font-size: 10px;
    line-height: 12px;
    text-align: center;
}

.dlg-body {
    flex: 1;
    box-sizing: border-box;
    background-color: #fff;
}

.checks {
    padding: 1px 0 0 2px;
    border: 2px solid #9aa6b8;
}

.checks label {
    display: flex;
    align-items: center;
    gap: 5px;
    height: 12px;
    line-height: 12px;
}

.chk {
    position: relative;
    flex: none;
    width: 9px;
    height: 9px;
    border: 1px solid #a0a090;
    background-color: #f0eee4;
}

.chk::after {
    content: "";
    position: absolute;
    left: 3px;
    top: 0;
    width: 2px;
    height: 5px;
    border-right: 2px solid #14a014;
    border-bottom: 2px solid #14a014;
    transform: rotate(40deg);
}

/* 属性表 */
.props {
    width: 373px;
    table-layout: fixed;
    border-collapse: collapse;
}

.props th, .props td {
    padding: 0;
    border-right: 1px solid #c0c0c0;
    border-bottom: 1px solid #c0c0c0;
    white-space: nowrap;
    overflow: hidden;
}

.props th {
    box-sizing: border-box;
    height: 23px;
    background: linear-gradient(#f8f7f0, #e8e6d8);
    font-weight: normal;
}

.props th.no {
    width: 22px;
}

.props th.hot {
    width: 120px;
    background: linear-gradient(#fbd898, #f2c060);
    color: #800080;
}

.props td {
    height: 18px;
}

.props td.no {
    background: linear-gradient(#f8f7f0, #e4e2d4);
    font-family: "Liberation Mono", monospace;
    font-size: 12px;
    text-align: center;
}

.cur td.no {
    background: #fbd08c;
    color: #800080;
}

.nm {
    padding-left: 20px !important;
}

.cur .nm {
    background-color: #316ac5;
    color: #fff;
}

.nm.link {
    color: #0000ff;
}

.nm.muted {
    padding-left: 3px !important;
    color: #808080;
}

.vl {
    padding-left: 2px !important;
    color: #808080;
}

.rebar-sym {
    margin-right: 1px;
    color: #000;
}

.plus {
    display: inline-block;
    width: 10px;
    height: 10px;
    margin-right: 5px;
    border: 1px solid #aaa;
    background-color: #ece9d8;
    color: #000;
    font-style: normal;
    line-height: 10px;
    text-align: center;
}
```
